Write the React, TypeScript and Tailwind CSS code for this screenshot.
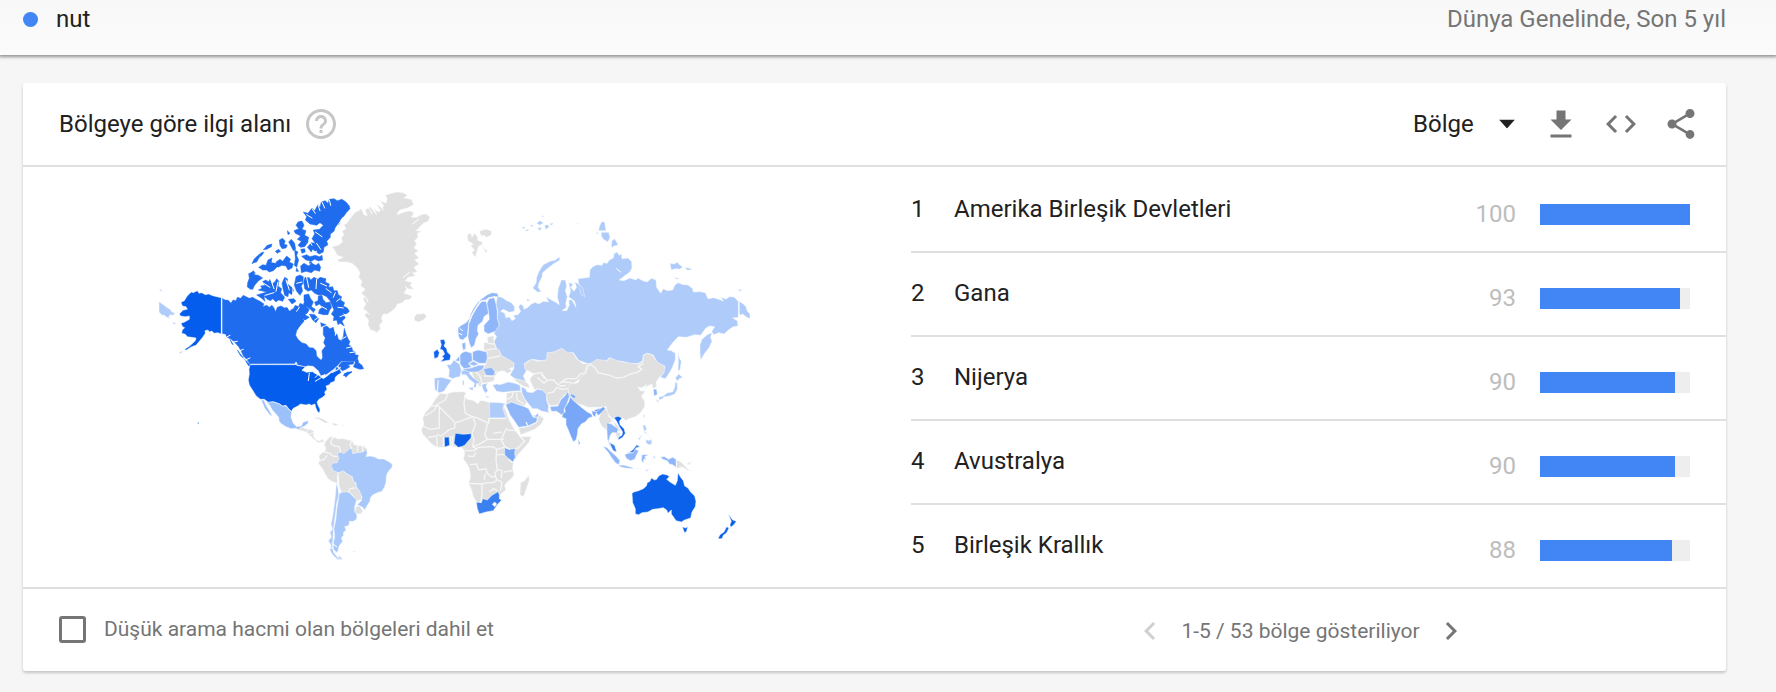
import { useState } from "react";

const regions = [
  { name: "Amerika Birleşik Devletleri", value: 100 },
  { name: "Gana", value: 93 },
  { name: "Nijerya", value: 90 },
  { name: "Avustralya", value: 90 },
  { name: "Birleşik Krallık", value: 88 },
];

type Shape = { fill: string; d: string };
type Sheet = { transform: string; shapes: Shape[]; lines?: string; cuts?: string };

const NONE = "#e0e0e0";
const US = "#055ded";
const CANADA = "#1f6dee";
const LOW = "#aecbfa";
const SOUTH = "#a8c7fa";
const MID = "#8fb6f8";
const INDIA = "#78a7f7";

// the map is split in sheets, each one drawn at three times its final size
const sheets: Sheet[] = [
  {
    // Alaska, Canada
    transform: "translate(150 180) scale(.3333)",
    shapes: [
      { fill: LOW, d: "M27 365L40 374 50 382 60 388 66 396 75 400 70 406 60 404 56 412 62 417 50 412 42 405 36 406 27 396ZM28 328L38 330 32 334ZM66 426L80 430 72 433Z" },
      { fill: US, d: "M214 353L200 350 188 347 176 342 166 344 155 338 147 340 142 332 130 338 124 336 118 342 111 349 103 362 93 367 97 378 108 380 112 388 100 390 88 402 92 408 106 410 118 408 118 418 104 426 93 430 98 440 104 443 97 450 95 460 106 463 112 470 125 472 138 474 136 482 128 490 118 499 104 508 108 511 125 500 138 496 148 484 158 472 166 460 165 452 174 450 178 456 186 453 192 460 203 458 214 462ZM100 514L86 521 92 516Z" },
      { fill: CANADA, d: "M216 355L225 360 235 361 243 370 249 360 258 362 262 352 272 355 280 346 290 351 298 355 308 352 318 358 330 364 342 372 338 380 350 376 358 382 366 376 372 384 377 395 382 382 393 378 404 384 412 382 418 392 430 386 436 376 446 380 450 370 460 374 463 366 471 369 470 382 478 388 473 398 465 404 478 412 466 420 458 428 448 440 440 452 437 466 444 478 455 488 468 492 478 503 490 504 498 512 500 528 508 536 514 541 518 532 516 512 527 498 521 488 526 474 520 464 520 442 530 438 540 446 550 442 553 456 562 465 565 478 574 482 580 470 583 445 588 462 595 478 600 485 596 494 605 500 608 512 616 516 615 524 625 526 622 538 612 543 576 545 562 560 548 572 532 584 514 588 506 572 490 558 474 556 462 561 440 555 436 551 300 552 292 540 280 528 274 514 266 500 254 487 244 478 232 472 224 462 216 462Z" },
      { fill: CANADA, d: "M296 281L308 276 314 284 325 286 338 294 325 303 314 316 308 328 302 328 292 321 293 308 298 295ZM325 330L336 325 332 318 346 316 336 306 347 300 356 305 360 298 367 312 376 304 380 296 387 304 384 318 395 326 392 338 404 352 398 364 386 360 378 366 368 356 362 362 352 358 342 348 345 364 334 354 320 345 338 340 350 336ZM404 292L413 297 410 310 425 322 432 330 425 344 416 338 414 350 404 346 400 330 396 310ZM438 290L450 285 460 290 459 310 454 318 458 333 450 346 440 334 433 316ZM415 358L432 356 438 364 426 372Z" },
      { fill: CANADA, d: "M465 292L478 293 482 300 492 292 504 298 510 292 528 296 526 306 538 312 536 322 548 320 552 332 562 332 565 344 575 350 572 360 584 368 580 378 592 384 598 394 588 404 578 398 586 414 576 424 583 438 570 430 564 434 560 420 550 422 552 410 544 402 552 390 546 376 540 362 530 350 518 344 506 345 494 340 484 330 474 334 464 326 461 306ZM505 348L516 346 519 358 528 368 540 366 545 382 538 392 534 404 520 404 505 400 509 388 518 382 508 372 498 378 494 366 504 362ZM462 345L476 342 482 356 490 366 484 380 496 388 490 398 482 388 470 380 462 362ZM478 402L494 404 506 416 498 428 488 420ZM512 428L528 434 514 440Z" },
      { fill: CANADA, d: "M470 110L460 96 474 100 486 84 494 92 504 74 510 82 514 66 526 62 534 70 538 58 552 56 562 62 576 58 588 66 598 78 600 86 590 97 582 108 572 118 568 132 556 142 552 154 541 162 541 172 530 184 534 194 522 202 520 216 508 222 498 215 488 208 484 216 472 202 484 188 496 190 486 176 494 162 490 150 508 148 520 136 510 128 500 136 480 132 466 120ZM444 126L456 122 462 136 456 148 468 152 464 166 476 172 474 186 464 200 452 202 444 196 454 184 442 178 452 168 436 160 432 152 446 146 438 136Z" },
      { fill: CANADA, d: "M455 229L470 224 480 230 496 226 508 230 516 226 518 240 506 243 494 238 484 244 468 240ZM452 258L462 250 476 258 484 250 498 256 506 250 512 262 509 274 494 270 484 278 468 274 454 278ZM306 251L312 238 322 228 334 218 342 216 336 226 328 232 320 246 312 248ZM340 209L352 196 366 192 364 200 350 208ZM326 262L338 254 348 256 354 240 366 234 364 248 378 250 386 256 378 264 370 272 358 276 350 270 338 270ZM388 180L398 175 406 184 402 192 412 196 408 204 396 206 390 196ZM416 186L424 178 434 190 437 208 430 212 424 200ZM378 246L390 238 398 244 410 228 422 238 418 246 430 252 426 264 414 270 408 258 396 256 384 262ZM434 210L444 216 440 226 446 240 440 262 433 256 436 236ZM412 152L420 160 414 164ZM452 208L464 206 466 216 456 220ZM376 214L386 208 392 214 382 220ZM300 282L310 272 316 280ZM440 264L446 274 438 274ZM480 244L488 250 478 250Z" },
      { fill: CANADA, d: "M610 560L616 548 613 542 624 538 626 548 636 556 641 566 630 568 618 564ZM582 585L592 577 606 576 596 583 588 592ZM240 478L250 494 246 492ZM262 510L280 534 272 528ZM284 538L302 556 296 558Z" },
    ],
    cuts:
      "M470 104L486 114M486 86L496 100M504 74L510 92M516 66L524 84M538 60L542 76M470 128L452 120M496 156L516 170M476 180L486 196M580 112L560 140M600 104L578 122M500 190L512 208M486 220L500 214M470 292L476 322M500 298L498 326M512 310L530 318M528 326L544 338M556 338L550 352M570 356L560 364M580 384L564 382M592 402L570 410M332 304L360 322M362 298L372 326M384 306L378 334M345 346L372 338M408 300L418 330M440 310L456 306M380 378L392 368M420 392L412 380M448 382L440 394M494 420L508 410M516 380L530 388M470 404L486 396M430 300L428 350M462 420L474 430M606 500L590 504M616 516L600 518M588 470L578 476M558 450L556 466M232 470L240 466M250 486L262 484M270 512L280 508M286 540L300 534",
    lines: "M215 353V462L228 466M302 553H436L438 547 442 556 468 562M514 588L532 584 548 572 562 560 576 545H612M528 586L548 580 562 568",
  },
  {
    // United States, Mexico and South America
    transform: "translate(150 330) scale(.3333)",
    shapes: [
      { fill: US, d: "M300 104H437L444 107 466 110 456 121 470 127 488 125 500 131 510 139 520 146 532 138 545 127 556 121 559 110 568 115 574 128 562 136 556 142 554 154 542 158 538 164 528 168 531 178 524 186 526 194 518 202 507 208 501 216 504 226 510 238 509 248 503 246 497 232 495 222 484 226 478 222 468 225 452 222 442 229 430 235 424 244 416 236 408 226 398 228 388 221 370 215 354 217 343 208 331 208 318 197 308 181 298 165 295 150 298 132 297 118Z" },
      { fill: CANADA, d: "M572 118L578 122 588 118 600 110 594 104 610 102 612 94 576 95 566 108ZM580 137L584 130 600 126 606 125 596 132Z" },
      { fill: "#9cc0fa", d: "M345 210L355 217 370 216 388 222 398 229 408 228 416 238 425 245 423 262 430 280 440 290 454 288 460 276 475 272 474 280 464 288 455 292 446 300 438 295 424 296 408 290 395 282 388 275 386 262 376 250 367 240 359 226ZM334 210L342 211 348 226 357 240 367 258 361 256 350 242 344 234Z" },
      { fill: NONE, d: "M444 299L456 290 464 296 478 297 492 304 490 318 496 328 508 333 518 328 524 336 516 336 506 338 492 328 482 318 470 306ZM490 265L500 262 512 264 524 270 536 278 526 279 514 272 504 267ZM543 280L554 280 566 285 554 287ZM514 284L524 286ZM575 285L582 286 576 288Z" },
      { fill: "#3f80ef", d: "M143 275L147 278 147 283 143 281Z" },
      { fill: NONE, d: "M528 333L538 322 548 319 546 328 554 322 564 327 580 326 596 330 606 332 612 344 626 347 640 348 652 358 648 368 606 372 570 382 564 402 550 412 556 425 566 428 562 460 548 455 534 446 526 432 516 414 505 400 510 392 507 378 514 370 524 365 528 354 522 345ZM565 430L580 421 590 432 606 440 611 455 618 460 618 472 628 482 635 494 634 510 620 514 612 500 600 488 575 488 568 470ZM618 530L628 528 638 542 634 551 622 552 615 546Z" },
      { fill: SOUTH, d: "M562 370L574 367 582 371 592 362 600 355 606 358 608 371 622 368 640 366 648 358 652 368 648 380 660 378 672 380 686 387 702 387 718 396 727 403 726 412 714 426 709 438 708 456 704 470 696 484 682 488 668 495 661 504 660 514 652 526 644 540 638 532 622 524 634 512 636 500 628 482 619 470 618 458 611 455 607 440 592 432 580 422 566 428 551 423 543 408 548 400 562 398 567 385Z" },
      { fill: SOUTH, d: "M568 490L580 486 596 486 610 500 620 510 614 530 614 544 621 556 620 568 610 574 598 574 597 586 584 590 588 600 580 608 581 616 574 624 578 634 570 644 566 652 564 664 558 668 550 658 550 640 554 620 552 596 558 566 560 540 564 516ZM564 674L578 688 568 688Z" },
      { fill: LOW, d: "M559 460L565 476 566 498 560 520 557 548 553 576 550 600 549 630 547 650 552 668 564 684 576 690 562 688 554 680 546 672 540 660 543 646 535 632 544 622 540 606 548 598 543 582 548 560 552 530 556 498Z" },
      { fill: NONE, d: "M608 663L617 663 612 667Z" },
    ],
    lines:
      "M546 326L542 340 552 348 568 350 572 366M524 366L540 370 548 378 562 380M508 392L522 388 532 376M606 332L600 345 606 356M624 347L622 364M638 348L638 366M566 428L562 440 565 465 568 490M596 488L600 476 614 474M620 512L634 510M478 297L470 304M492 306L480 312M545 128L562 120 572 112",
    cuts: "M458 120L470 112 484 120M478 130L475 152M492 128L504 134 496 142M496 154L512 144M514 142L524 134M546 640L560 650M540 650L556 664",
  },
  {
    // Greenland, Iceland
    transform: "translate(300 180) scale(.3333)",
    shapes: [
      { fill: NONE, d: "M150 116L164 98 176 92 184 86 192 104 202 108 196 90 210 80 220 92 230 104 222 84 234 96 242 92 230 72 246 84 252 78 240 62 258 70 262 58 256 46 274 40 292 36 310 38 322 46 312 54 334 58 341 74 322 84 300 90 290 102 306 98 330 92 342 98 334 112 350 112 364 104 378 101 390 112 384 124 370 130 360 140 348 152 366 154 352 160 354 172 344 182 350 192 342 204 356 212 344 220 357 234 344 240 358 252 342 262 352 276 338 278 346 288 324 292 316 302 336 308 330 316 342 328 320 326 312 340 336 348 330 358 314 360 308 368 292 372 286 384 274 394 262 402 250 402 244 414 248 424 238 436 242 446 230 458 222 452 212 450 204 434 206 420 194 406 202 396 190 386 198 372 190 360 194 348 184 340 196 328 182 318 186 304 176 292 180 278 170 262 156 250 140 246 118 246 112 240 130 232 112 226 102 208 96 200 114 196 128 186 124 174 132 164 126 154 138 146 132 134 142 128ZM332 400L342 412 350 402 362 402 372 400 380 409 370 420 355 426 342 421 344 414Z" },
    ],
    cuts: "M205 82L216 102M238 70L250 90M294 104L312 92 332 90M356 118L338 132M310 292L330 276M316 320L334 336M196 350L204 366M198 392L208 404",
  },
  {
    // Russia, Scandinavia
    transform: "translate(450 200) scale(.3333)",
    shapes: [
      { fill: LOW, d: "M142 290L156 292 170 302 184 308 194 320 193 334 178 337 160 328 152 334 164 340 168 354 178 350 186 362 196 356 190 346 204 344 212 334 206 322 210 312 220 318 222 328 234 322 244 312 256 307 266 312 280 304 296 306 288 290 304 300 316 306 328 314 322 290 325 265 334 240 346 240 350 258 346 272 352 290 347 312 350 322 336 332 350 332 358 316 356 300 366 300 378 322 374 304 356 290 362 274 356 248 370 252 362 262 372 274 380 262 374 246 390 254 398 264 404 290 394 284 388 262 384 236 402 234 418 232 420 210 428 200 442 194 456 196 460 188 472 190 478 180 490 174 492 162 500 156 508 166 514 162 516 176 534 174 545 185 546 204 540 216 526 226 508 240 522 242 540 234 558 240 564 234 578 242 592 246 604 235 618 240 620 262 632 280 640 266 652 272 668 270 674 256 684 248 700 254 714 255 728 266 730 276 752 275 766 278 774 296 792 293 812 300 820 304 814 292 828 298 838 290 852 291 865 304V352L848 354 862 362 864 378 850 380 838 388 822 402 806 398 792 404 785 395 794 380 778 378 766 386 752 406 734 404 710 412 685 410 668 428 652 450 664 452 676 460 676 480 666 505 654 525 646 536 632 532 642 510 645 500 630 492 620 485 610 465 592 460 580 465 578 482 566 490 545 492 520 485 495 482 478 473 465 488 440 485 418 492 405 488 385 480 370 458 356 462 338 448 318 455 295 460 294 480 270 482 250 478 236 482 222 492 230 510 220 528 228 546 210 542 192 534 180 525 192 505 190 492 172 486 155 480 152 460 140 445 132 425 140 410 132 400 136 388 148 375 142 355 144 335 138 315Z" },
      { fill: LOW, d: "M786 398L782 412 786 424 778 442 764 460 752 480 750 458 750 435 756 418 772 404ZM684 456L688 474 694 484 690 510 684 512 685 486ZM868 304L880 312 888 320 892 334 900 342V356L888 350 878 342 872 346 868 340ZM863 270L876 268 872 274ZM328 171L330 180 310 192 292 206 278 218 276 232 268 246 264 262 274 276 262 276 248 264 258 250 260 232 268 212 280 194 300 184 316 180ZM455 65L464 66 468 92 446 92 448 80ZM454 97L476 97 480 112 474 126 460 118 454 108ZM484 136L486 122 494 116 502 130 504 136 492 138 486 143ZM660 190L672 192 682 187 690 196 698 200 690 208 678 206 664 210ZM704 203L718 204 726 210 712 210ZM676 232L688 236 678 238ZM214 82L226 80 222 86ZM240 74L250 76 246 82ZM260 70L270 62 280 68 270 76ZM284 76L294 74 298 82 286 88ZM298 72L310 68 306 76ZM224 90L238 88 232 94ZM262 84L276 82 270 92ZM278 46L282 50 276 52ZM230 296L240 300 232 304ZM438 98L446 98 442 103Z" },
      { fill: NONE, d: "M52 104L62 100 66 112 74 100 82 110 84 122 98 126 96 134 86 138 82 150 76 172 66 158 74 150 62 138 70 132 54 122ZM88 94L106 88 124 92 124 104 110 112 102 106 94 108ZM98 136L106 148 112 152 108 160ZM380 69L386 72 380 72Z" },
      { fill: MID, d: "M24 384L34 376 48 368 58 356 62 342 70 326 80 312 90 300 102 292 112 284 126 278 142 280 146 290 134 290 126 296 118 292 106 300 94 302 82 316 74 328 64 346 56 370 52 408 38 420 28 416 24 402ZM57 368L66 346 76 328 84 318 94 304 108 304 114 324 116 340 102 350 98 364 84 376 82 392 86 402 78 416 74 434 64 444 58 430 54 410ZM118 294L132 290 138 312 142 335 142 356 148 375 136 394 114 402 102 394 102 376 118 358 116 340 110 312ZM38 432L46 426 48 446 40 452Z" },
    ],
    lines: "M57 368L66 346 82 318 94 302 108 302 118 294 136 290",
    cuts: "M500 206L512 216M30 386L38 392M26 400L36 404M86 300L92 308",
  },
  {
    // Europe, Africa, Middle East, India
    transform: "translate(400 300) scale(.3333)",
    shapes: [
      { fill: NONE, d: "M262 112L280 107 283 130 288 145 298 150 302 165 325 178 343 190 340 202 328 206 336 214 322 220 312 212 300 214 292 218 284 230 282 242 270 246 258 248 246 250 240 262 232 250 222 235 215 217 230 207 250 205 258 190 262 158 252 150 252 128 264 128Z" },
      { fill: SOUTH, d: "M140 194L152 194 162 180 180 194 184 210 180 230 168 232 158 236 146 230 148 210ZM103 235L125 232 155 240 142 258 132 274 118 278 105 270ZM278 256L290 252 300 254 325 246 345 250 360 256 362 272 335 274 310 277 290 274ZM183 214L200 208 212 212 208 220 220 234 234 244 240 250 230 250 228 262 220 262 224 250 208 238 198 224 186 224ZM205 264L220 262 218 272ZM188 240L192 242 192 256 188 254ZM245 254L262 250 258 260 264 272 256 280 250 270ZM255 288L270 290 262 293Z" },
      { fill: MID, d: "M180 166L186 158 198 154 215 160 217 182 206 190 214 202 192 206 180 192ZM218 155L235 150 260 156 262 174 257 190 238 190 218 180ZM250 207L274 202 286 216 280 230 258 226ZM186 130L196 128 196 146 188 148ZM166 182L178 168 180 184Z" },
      { fill: "#9bbef8", d: "M206 192L220 184 236 192 222 198ZM186 208L212 204 236 196 254 196 248 208 232 216 210 216Z" },
      { fill: "#0f63ec", d: "M120 120L132 118 136 128 132 138 140 146 142 156 152 166 150 180 136 182 122 185 132 174 126 170 134 162 128 150 120 148 124 134ZM101 156L112 148 118 158 114 172 103 176Z" },
      { fill: NONE, d: "M340 236L356 238 372 242 386 252 388 264 370 258 356 250ZM320 280L340 276 362 274 370 290 380 308 372 318 350 312 335 306 318 316Z" },
      { fill: SOUTH, d: "M364 260L376 266 382 276 398 278 412 268 428 270 440 282 440 302 446 318 444 332 450 338 426 334 412 326 398 326 386 312 374 296 366 280Z" },
      { fill: MID, d: "M317 314L335 306 350 312 374 320 386 326 394 342 400 352 412 352 410 366 384 378 356 382 344 364 330 344ZM396 348L408 346 415 338 414 352Z" },
      { fill: NONE, d: "M356 384L384 380 410 368 414 354 416 344 432 356 424 372 404 388 378 398 362 404ZM374 192L394 178 414 184 440 180 441 158 462 156 485 145 500 156 518 158 530 176 550 192 572 190 572 230 540 238 512 254 506 268 508 276 496 282 482 298 476 314 452 318 442 306 440 284 428 270 412 266 404 270 392 246 390 236 402 222 384 212 374 206Z" },
      { fill: MID, d: "M450 320L474 318 482 300 496 286 502 276 510 284 506 296 500 314 492 328 494 340 484 344 470 334 454 334Z" },
      { fill: INDIA, d: "M506 306L510 292 506 284 522 282 524 298 530 310 544 322 562 336 574 342 578 350 566 354 556 366 544 372 534 386 532 404 528 420 520 425 512 408 506 392 498 374 498 356 486 352 488 342 496 336 494 324ZM534 418L541 430 536 434Z" },
      { fill: NONE, d: "M120 280L136 282 160 276 190 275 198 278 194 290 202 298 222 302 234 312 240 302 252 302 268 308 300 308 316 310 312 320 320 338 326 358 336 376 346 392 360 410 394 410 386 428 370 446 354 464 344 480 340 490 338 505 342 522 338 532 322 546 314 556 318 570 302 582 290 610 240 620 230 606 220 590 215 570 206 550 212 530 208 505 200 490 190 478 194 462 192 450 185 442 150 438 130 442 112 442 95 432 80 415 68 402 64 390 72 372 68 355 76 338 94 318 106 298ZM362 548L374 542 386 526 388 540 378 570 370 590 360 584Z" },
      { fill: LOW, d: "M269 307L300 308 313 310 308 324 318 354H269Z" },
      { fill: "#0b60ea", d: "M133 412L147 411 149 436 134 441ZM166 400L190 403 214 401 213 414 204 424 194 436 184 440 174 442 162 430Z" },
      { fill: INDIA, d: "M314 443L330 448 346 446 344 460 346 472 338 486 326 476 314 464Z" },
      { fill: "#3b80f0", d: "M229 607L244 608 248 596 262 600 276 586 294 575 298 584 298 596 305 600 292 614 280 632 258 636 238 642 232 626Z" },
      { fill: "#fff", d: "M277 613L284 606 290 612 284 620Z" },
      { fill: INDIA, d: "M596 326L600 324 600 340 588 336 582 330Z" },
    ],
    lines:
      "M145 277L136 300 110 314 104 330 76 348M112 314L118 320 165 368 180 364 218 350M195 284L192 310 196 340 218 350M218 350L228 352 266 370 268 355H318M118 320L118 384 90 388 70 378M165 368L164 384 146 390 132 402 122 408 112 402M220 352L226 374 216 400M262 372L258 392 254 402 262 418 290 418 312 418M266 370V356M320 384L310 404 304 420 314 440 330 448M216 402L222 420 218 440 236 434 262 418M218 440L230 446 236 442 280 440 290 448 312 442M194 452L222 452 230 446M204 468L220 470 228 458M210 494L230 492 236 510 258 506 262 520 276 532 286 528M206 550L246 552 262 548M246 552V584L242 608M252 540L256 520M262 548L280 548 292 540 306 546M268 576L280 566 292 572M292 510L284 520 290 540M290 448L288 480 292 508 306 512 304 534M314 464L292 464M326 478L338 488M340 512L312 516M346 392L322 390M360 410L374 424 354 444 346 446M306 546L302 572M84 412L110 408 112 440M130 410V440M152 408V440M158 408V438M94 318L112 318M115 240L112 274M262 130L282 132M258 150L288 146M262 176L300 168M284 218L292 214M252 228H284M240 228L246 250M228 216L240 228M180 194L186 208M400 222L424 218 440 240 460 240 470 250 482 258 498 256M424 224L434 236M444 240L432 250 412 232M442 280L460 276 470 262M478 250L500 236 530 236M488 246L516 248M470 262L486 268 506 266M530 236L538 224 556 218 560 200 572 192M340 276L336 290 322 298M350 278L352 300 372 312M384 378L378 366M280 400L306 396",
  },
  {
    // East Asia, Oceania
    transform: "translate(530 360) scale(.3333)",
    shapes: [
      { fill: NONE, d: "M180 12L200 -2 232 2 240 -7 262 2 290 8 325 12 340 4 340 -14 352 -20 368 -14 380 5 392 12 405 18 402 40 388 52 378 66 380 82 368 84 366 72 352 78 346 88 350 74 334 84 324 80 330 92 346 94 334 108 344 124 344 140 332 158 316 170 296 176 288 182 278 174 262 172 246 176 234 162 228 140 200 142 172 142 150 134 132 124 118 108 116 96 114 80 120 72 144 68 154 50 168 40 174 24Z" },
      { fill: NONE, d: "M206 178L212 160 222 146 232 150 236 168 246 176 250 184 236 190 230 200 236 220 228 208 218 202 212 192ZM250 184L262 196 272 212 258 214 256 200ZM256 216L272 218 270 230 260 232Z" },
      { fill: INDIA, d: "M185 152L200 156 208 148 220 140 226 146 214 158 206 166 198 158 196 172 188 164ZM120 100L138 108 134 116 124 110Z" },
      { fill: MID, d: "M230 188L244 192 252 198 264 206 262 218 246 218 240 228 236 244 246 256 240 258 232 236ZM370 87L380 88 382 104 372 108Z" },
      { fill: "#0f63ec", d: "M252 173L264 169 276 174 268 184 270 194 282 206 286 220 278 232 264 240 266 232 276 226 278 216 268 200 260 184Z" },
      { fill: "#3f80ef", d: "M240 248L254 256 260 276 250 272 244 262ZM296 278L310 268 320 254 330 260 318 264 312 278Z" },
      { fill: MID, d: "M220 260L230 262 244 276 258 288 270 302 266 314 256 308 244 292 234 276ZM284 284L294 280 310 278 316 268 326 272 320 284 314 298 302 302 290 296ZM266 316L282 316 304 322 312 326 288 324 270 320ZM336 284L356 284 344 290 350 300 342 296 340 310 334 300ZM392 290L404 290 416 298 428 292 438 298V322L428 314 418 312 412 302 398 298ZM320 325L336 326ZM346 332L358 326 350 334ZM372 286L376 296 370 292Z" },
      { fill: LOW, d: "M386 112L400 108 412 98 428 96 434 82 436 66 442 70 442 88 434 102 420 108 404 110 394 118 388 120ZM436 54L446 42 458 52 448 56 442 64ZM378 118L388 124 382 126ZM340 162L344 168 340 174ZM338 196L346 196 350 208 344 214 354 222 344 218ZM348 238L356 242 364 238 366 252 356 254 348 248ZM324 238L338 222 328 240ZM352 228L360 234Z" },
      { fill: NONE, d: "M440 299L456 308 462 316 472 326 484 334 472 330 456 320 440 326ZM470 312L484 304 478 314ZM562 354L566 358ZM616 370L624 366Z" },
      { fill: "#0b61ea", d: "M306 400L312 396 326 392 340 386 349 378 352 368 360 364 364 354 374 360 380 358 386 348 398 342 412 345 418 350 410 358 420 366 436 376 442 362 444 338 452 352 460 362 464 378 474 384 482 396 494 408 498 424 496 440 486 456 482 474 464 480 454 486 438 482 430 470 424 462 424 450 414 460 410 450 400 443 384 446 368 448 354 456 336 458 326 464 316 462 316 446 308 428ZM458 500L466 504 473 500 470 514 464 518 460 510ZM595 462L602 472 608 480 619 484 612 494 602 502 600 494 604 484ZM590 500L597 504 590 518 580 526 576 536 564 536 570 524 582 516Z" },
    ],
    lines: "M180 12L196 24 204 38 240 46 258 54 280 52 300 42 320 38 336 28 324 20 340 10M236 168L246 176 244 192M148 132L172 142 188 148",
  },
];

function WorldMap() {
  return (
    <svg viewBox="23 167 888 420" className="block w-full" role="img" aria-label="Dünya haritası">
      {sheets.map((sheet) => (
        <g key={sheet.transform} transform={sheet.transform} strokeLinejoin="round">
          {sheet.shapes.map((shape) => (
            <path
              key={shape.d}
              d={shape.d}
              fill={shape.fill}
              stroke={shape.fill === CANADA ? CANADA : "#f5f8fe"}
              strokeWidth="1.5"
            />
          ))}
          {sheet.cuts && <path d={sheet.cuts} fill="none" stroke="#fff" strokeWidth="3" strokeLinecap="round" />}
          {sheet.lines && <path d={sheet.lines} fill="none" stroke="#f8f8f8" strokeWidth="4" strokeOpacity=".9" />}
        </g>
      ))}
    </svg>
  );
}

function Icon({ d }: { d: string }) {
  return (
    <svg viewBox="0 0 24 24" className="size-9" fill="currentColor" aria-hidden="true">
      <path d={d} />
    </svg>
  );
}

export default function App() {
  const [resolution, setResolution] = useState("region");
  const [lowVolume, setLowVolume] = useState(false);

  return (
    <div className="min-h-screen bg-[#f6f6f6] pb-5 font-[Roboto,sans-serif] text-2xl text-[#212121]">
      <header className="flex h-[55px] justify-between bg-linear-to-b from-[#f8f8f8] to-[#fbfbfb] pt-1 pr-[50px] pl-[23px] leading-[30px] shadow-[0_1px_3px_1px_rgba(0,0,0,0.4)]">
        <div className="flex items-center gap-[18px] self-start">
          <span className="size-[15px] rounded-full bg-[#4285f4]"></span>
          <span>nut</span>
        </div>
        <span className="text-[#757575]">Dünya Genelinde, Son 5 yıl</span>
      </header>

      <section className="mt-7 mr-[50px] ml-[23px] rounded-[3px] bg-white shadow-[0_2px_3px_rgba(0,0,0,0.2)]">
        <div className="flex h-[84px] items-center justify-between border-b-2 border-[#e0e0e0] pr-[27px] pl-9">
          <div className="flex items-center gap-3">
            <h2>Bölgeye göre ilgi alanı</h2>
            <button aria-label="Yardım" className="text-[#c6c6c6]">
              <Icon d="M11 18h2v-2h-2v2zm1-16C6.48 2 2 6.48 2 12s4.48 10 10 10 10-4.48 10-10S17.52 2 12 2zm0 18c-4.41 0-8-3.59-8-8s3.59-8 8-8 8 3.59 8 8-3.59 8-8 8zm0-14c-2.21 0-4 1.79-4 4h2c0-1.1.9-2 2-2s2 .9 2 2c0 2-3 1.75-3 5h2c0-2.25 3-2.5 3-5 0-2.21-1.79-4-4-4z" />
            </button>
          </div>
          <div className="flex items-center gap-6 text-[#757575]">
            <div className="relative text-[#212121]">
              <select
                aria-label="Çözünürlük"
                value={resolution}
                onChange={(e) => setResolution(e.target.value)}
                className="w-[106px] appearance-none bg-transparent outline-none"
              >
                <option value="region">Bölge</option>
                <option value="city">Şehir</option>
              </select>
              <svg viewBox="0 0 16 9" className="pointer-events-none absolute top-1/2 right-1 h-[9px] w-4 -translate-y-1/2" aria-hidden="true">
                <path d="M0 0h16L8 9z" fill="#212121" />
              </svg>
            </div>
            <button aria-label="İndir">
              <Icon d="M19 9h-4V3H9v6H5l7 7 7-7zM5 19v2h14v-2H5z" />
            </button>
            <button aria-label="Yerleştir">
              <Icon d="M9.4 16.6L4.8 12l4.6-4.6L8 6l-6 6 6 6 1.4-1.4zm5.2 0l4.6-4.6-4.6-4.6L16 6l6 6-6 6-1.4-1.4z" />
            </button>
            <button aria-label="Paylaş">
              <Icon d="M18 16.08c-.76 0-1.44.3-1.96.77L8.91 12.7c.05-.23.09-.46.09-.7s-.04-.47-.09-.7l7.05-4.11c.54.5 1.25.81 2.04.81 1.66 0 3-1.34 3-3s-1.34-3-3-3-3 1.34-3 3c0 .24.04.47.09.7L8.04 9.81C7.5 9.31 6.79 9 6 9c-1.66 0-3 1.34-3 3s1.34 3 3 3c.79 0 1.5-.31 2.04-.81l7.12 4.16c-.05.21-.08.43-.08.65 0 1.61 1.31 2.92 2.92 2.92s2.92-1.31 2.92-2.92-1.31-2.92-2.92-2.92z" />
            </button>
          </div>
        </div>

        <div className="grid grid-cols-[888fr_815fr] border-b-2 border-[#e0e0e0]">
          <WorldMap />
          <table className="w-full border-separate border-spacing-0 self-start">
            <tbody>
              {regions.map((region, i) => (
                <tr key={region.name} className="h-[84px] *:border-t-2 *:border-[#e0e0e0] first:*:border-transparent">
                  <td className="w-[43px] pb-0.5">{i + 1}</td>
                  <td className="pb-0.5">{region.name}</td>
                  <td className="w-20 pt-2 text-right text-[#bdbdbd]">{region.value}</td>
                  <td className="w-[210px] pt-2 pr-9 pl-6">
                    <div className="h-[21px] bg-[#eeeeee]">
                      <div className="h-full bg-[#4285f4]" style={{ width: `${region.value}%` }}></div>
                    </div>
                  </td>
                </tr>
              ))}
            </tbody>
          </table>
        </div>

        <div className="grid h-[82px] grid-cols-[888fr_815fr] items-center text-[21px] text-[#757575]">
          <label className="flex items-center gap-[18px] pb-0.5 pl-9">
            <input
              type="checkbox"
              checked={lowVolume}
              onChange={(e) => setLowVolume(e.target.checked)}
              className="size-[27px] appearance-none rounded-[3px] border-3 border-[#757575] checked:bg-[#4285f4]"
            />
            Düşük arama hacmi olan bölgeleri dahil et
          </label>
          <div className="flex items-center justify-center gap-[13px] pt-0.5 pr-9">
            <button aria-label="Önceki" disabled className="text-[#d0d0d0]">
              <Icon d="M15.41 7.41L14 6l-6 6 6 6 1.41-1.41L10.83 12z" />
            </button>
            <span>1-5 / 53 bölge gösteriliyor</span>
            <button aria-label="Sonraki">
              <Icon d="M10 6L8.59 7.41 13.17 12l-4.58 4.59L10 18l6-6z" />
            </button>
          </div>
        </div>
      </section>
    </div>
  );
}
